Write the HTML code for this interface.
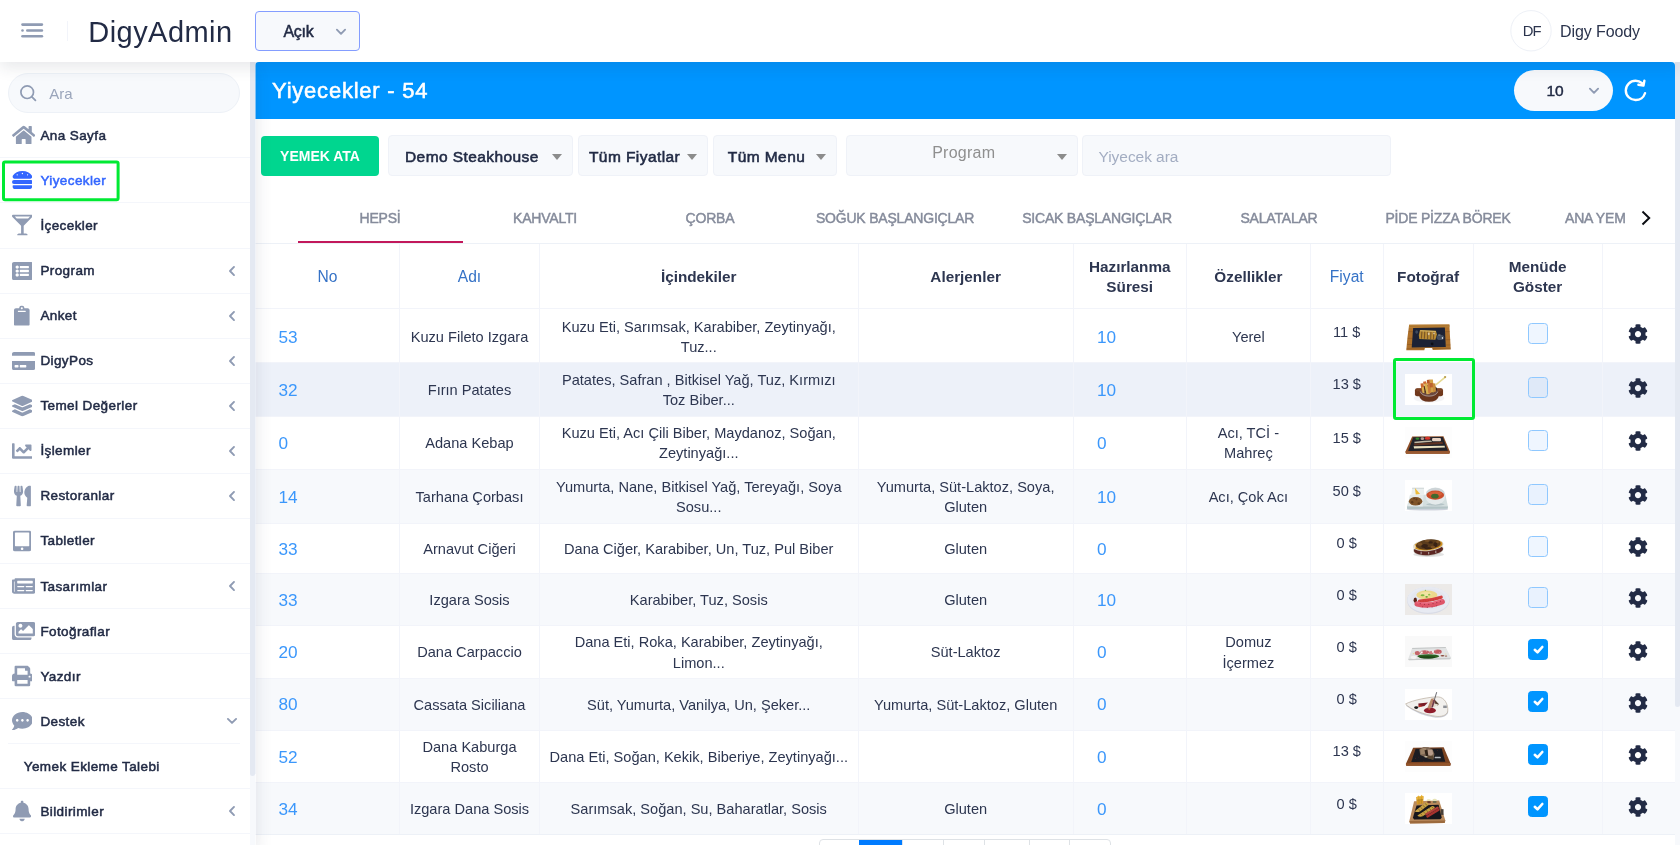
<!DOCTYPE html><html><head><meta charset="utf-8"><title>DigyAdmin</title><style>
*{box-sizing:border-box;margin:0;padding:0}
html,body{width:1680px;height:845px;overflow:hidden;background:#fff}
body{font-family:"Liberation Sans",sans-serif;color:#222b45;position:relative;-webkit-font-smoothing:antialiased}
.abs{position:absolute}
.t{position:absolute;white-space:nowrap;line-height:20px}
.c{transform:translateX(-50%);text-align:center}
#top{will-change:transform;left:0;top:0;width:1680px;height:62px;background:#fff;box-shadow:0 6px 14px 0 rgba(44,51,73,.10);z-index:30}
#side{will-change:transform;left:0;top:62px;width:256px;height:783px;background:linear-gradient(to right,#fff 255px,transparent 255px);box-shadow:0 8px 16px 0 rgba(44,51,73,.12);z-index:20}
#main{will-change:transform;left:255px;top:62px;width:1419.5px;height:783px;background:#fff;z-index:10}
.mi{position:absolute;left:0;width:250px;height:45.07px;border-bottom:1px solid #f4f6fb}
.mi .ic{position:absolute;top:50%;transform:translateY(-50%);line-height:0}
.mi .lb{position:absolute;left:40.4px;top:50%;margin-top:-9.5px;line-height:20px;font-size:13.5px;font-weight:400;-webkit-text-stroke:0.5px currentColor;letter-spacing:0.4px;white-space:nowrap}
.mi .ch{position:absolute;left:228px;top:50%;margin-top:-6px;line-height:0}
.dd{position:absolute;top:73px;height:41px;background:#f7f9fc;border:1px solid #eff2f8;border-radius:4px}
.dd .lb{position:absolute;top:10.7px;line-height:20px;font-size:15.5px;font-weight:400;-webkit-text-stroke:0.55px currentColor;letter-spacing:0.42px;white-space:nowrap}
.caret{position:absolute;width:0;height:0;border-left:5px solid transparent;border-right:5px solid transparent;border-top:6px solid #8c8c8c}
.tab{position:absolute;top:145.5px;line-height:20px;font-size:14px;color:#858b9b;-webkit-text-stroke:0.45px currentColor;letter-spacing:-0.2px;white-space:nowrap;transform:translateX(-50%)}
.vl{position:absolute;top:182px;width:1px;background:#f2f4fa;height:601px}
.row{position:absolute;left:0;width:1419.5px;box-shadow:inset 0 1px 0 #f2f4fa}
.cell{position:absolute;top:0;height:100%;display:flex;align-items:center;justify-content:center;text-align:center;font-size:14.6px;line-height:20.4px;white-space:pre;color:#2d3650;padding-top:4.4px}
.num{position:absolute;font-size:17.2px;color:#3b97fb;line-height:20px;top:50%;margin-top:-8.3px}
.hd{font-weight:700;font-size:15.3px;line-height:20.4px;padding-top:2.6px}
.hl{color:#3572c6;font-weight:400;font-size:15.6px}
.cb{position:absolute;left:1272.7px;width:20.5px;height:21px;border-radius:3.5px;border:1px solid #8fc8ff;background:#eff6ff}
.cb.on{background:#0095ff;border-color:#0095ff}
.img{position:absolute;left:1150px;width:47px;height:31px;overflow:hidden;line-height:0}
</style></head><body>
<div id="top" class="abs">
<svg class="abs" style="left:21px;top:23px" width="23" height="15" viewBox="0 0 23 15"><g fill="#8f9bb3"><rect x="0.2" y="0.3" width="22" height="2.6" rx="1.3"/><rect x="0.2" y="6.2" width="2.6" height="2.6" rx="1.3"/><rect x="5" y="6.2" width="17.2" height="2.6" rx="1.3"/><rect x="0.2" y="12" width="22" height="2.6" rx="1.3"/></g></svg>
<div class="abs" style="left:67px;top:21px;width:1px;height:20px;background:#f2f4fa"></div>
<div class="t " style="left:88.3px;top:21.5px;font-size:29px;font-weight:400;color:#222b45;letter-spacing:0.45px;line-height:34px;margin-top:-7px;">DigyAdmin</div>
<div class="abs" style="left:255px;top:11px;width:105px;height:40px;border:1px solid #849dff;border-radius:4px;background:#f7f9fc"></div>
<div class="t " style="left:283.5px;top:21.8px;font-size:16px;font-weight:400;color:#222b45;letter-spacing:-0.3px;-webkit-text-stroke:0.5px #222b45;">Açık</div>
<svg class="abs" style="left:335px;top:27.6px" width="12" height="8" viewBox="0 0 12 8"><path d="M1.9 1.7 L6 5.8 L10.1 1.7" fill="none" stroke="#8f9bb3" stroke-width="1.9" stroke-linecap="round" stroke-linejoin="round"/></svg>
<svg class="abs" style="left:1505px;top:5px" width="52" height="52"><circle cx="26" cy="25.75" r="20.2" fill="#fff" stroke="#eef1f7" stroke-width="1"/></svg>
<div class="t c" style="left:1531.6px;top:21.3px;font-size:14.8px;font-weight:400;color:#2b344d;letter-spacing:-1.0px;">DF</div>
<div class="t " style="left:1560px;top:22.200000000000003px;font-size:16px;font-weight:400;color:#2b344d;letter-spacing:-0.1px;">Digy Foody</div>
</div>
<div id="side" class="abs">
<div class="abs" style="left:7.5px;top:10.5px;width:232px;height:40px;border:1px solid #edf1f7;border-radius:20px;background:#f7f9fc"></div>
<svg class="abs" style="left:19px;top:22px" width="19" height="19" viewBox="0 0 19 19"><circle cx="8.2" cy="8.2" r="6.3" fill="none" stroke="#8f9bb3" stroke-width="1.7"/><path d="M12.9 12.9 L16.4 16.4" stroke="#8f9bb3" stroke-width="1.8" stroke-linecap="round"/></svg>
<div class="t " style="left:49.3px;top:22.299999999999997px;font-size:15px;font-weight:400;color:#9aa5bb;letter-spacing:0px;">Ara</div>
<div class="mi" style="top:51.30px;"><div class="ic" style="left:11.70px"><svg width="23.400" height="20.8" viewBox="0 0 576 512" style=""><path fill="#8f9bb3" d="M280.37 148.26L96 300.11V464a16 16 0 0 0 16 16l112.06-.29a16 16 0 0 0 15.92-16V368a16 16 0 0 1 16-16h64a16 16 0 0 1 16 16v95.64a16 16 0 0 0 16 16.05L464 480a16 16 0 0 0 16-16V300L295.67 148.26a12.19 12.19 0 0 0-15.3 0zM571.6 251.47L488 182.56V44.05a12 12 0 0 0-12-12h-56a12 12 0 0 0-12 12v72.61L318.47 43a48 48 0 0 0-61 0L4.34 251.47a12 12 0 0 0-1.6 16.9l25.5 31A12 12 0 0 0 45.15 301l235.22-193.74a12.19 12.19 0 0 1 15.3 0L530.9 301a12 12 0 0 0 16.9-1.6l25.5-31a12 12 0 0 0-1.7-16.93z"/></svg></div><div class="lb" style="color:#222b45">Ana Sayfa</div></div>
<div class="mi" style="top:96.37px;"><div class="ic" style="left:11.70px"><svg width="20.800" height="20.8" viewBox="0 0 512 512" style=""><path fill="#3366ff" d="M464 256H48a48 48 0 0 0 0 96h416a48 48 0 0 0 0-96zm16 128H32a16 16 0 0 0-16 16v16a64 64 0 0 0 64 64h352a64 64 0 0 0 64-64v-16a16 16 0 0 0-16-16zM58.64 224h394.72c34.57 0 54.62-43.9 34.82-75.88C448 83.2 359.55 32.1 256 32c-103.54.1-192 51.2-232.18 116.11C4 180.09 24.07 224 58.64 224zM384 112a16 16 0 1 1-16 16 16 16 0 0 1 16-16zM256 80a16 16 0 1 1-16 16 16 16 0 0 1 16-16zm-128 32a16 16 0 1 1-16 16 16 16 0 0 1 16-16z"/></svg></div><div class="lb" style="color:#3366ff">Yiyecekler</div></div>
<div class="mi" style="top:141.44px;"><div class="ic" style="left:11.70px"><svg width="20.800" height="20.8" viewBox="0 0 512 512" style=""><path fill="#8f9bb3" d="M502.05 57.6C523.3 36.34 508.25 0 478.2 0H33.8C3.75 0-11.3 36.34 9.95 57.6L224 271.64V464h-56c-22.09 0-40 17.91-40 40 0 4.42 3.58 8 8 8h240c4.42 0 8-3.58 8-8 0-22.09-17.91-40-40-40h-56V271.64L502.05 57.6zM443.77 48l-48 48H116.24l-48-48h375.53z"/></svg></div><div class="lb" style="color:#222b45">İçecekler</div></div>
<div class="mi" style="top:186.51px;"><div class="ic" style="left:11.70px"><svg width="20.800" height="20.8" viewBox="0 0 512 512" style=""><path fill="#8f9bb3" d="M464 480H48c-26.51 0-48-21.49-48-48V80c0-26.51 21.49-48 48-48h416c26.51 0 48 21.49 48 48v352c0 26.51-21.49 48-48 48zM128 120c-22.091 0-40 17.909-40 40s17.909 40 40 40 40-17.909 40-40-17.909-40-40-40zm0 96c-22.091 0-40 17.909-40 40s17.909 40 40 40 40-17.909 40-40-17.909-40-40-40zm0 96c-22.091 0-40 17.909-40 40s17.909 40 40 40 40-17.909 40-40-17.909-40-40-40zm288-136v-32c0-6.627-5.373-12-12-12H204c-6.627 0-12 5.373-12 12v32c0 6.627 5.373 12 12 12h200c6.627 0 12-5.373 12-12zm0 96v-32c0-6.627-5.373-12-12-12H204c-6.627 0-12 5.373-12 12v32c0 6.627 5.373 12 12 12h200c6.627 0 12-5.373 12-12zm0 96v-32c0-6.627-5.373-12-12-12H204c-6.627 0-12 5.373-12 12v32c0 6.627 5.373 12 12 12h200c6.627 0 12-5.373 12-12z"/></svg></div><div class="lb" style="color:#222b45">Program</div><div class="ch"><svg width="8" height="12" viewBox="0 0 8 12"><path d="M6.0 1.9 L2.0 6 L6.0 10.1" fill="none" stroke="#8f9bb3" stroke-width="1.9" stroke-linecap="round" stroke-linejoin="round"/></svg></div></div>
<div class="mi" style="top:231.58px;"><div class="ic" style="left:14.30px"><svg width="15.600" height="20.8" viewBox="0 0 384 512" style=""><path fill="#8f9bb3" d="M384 112v352c0 26.51-21.49 48-48 48H48c-26.51 0-48-21.49-48-48V112c0-26.51 21.49-48 48-48h80c0-35.29 28.71-64 64-64s64 28.71 64 64h80c26.51 0 48 21.49 48 48zM192 40c-13.255 0-24 10.745-24 24s10.745 24 24 24 24-10.745 24-24-10.745-24-24-24m96 114v-20a6 6 0 0 0-6-6H102a6 6 0 0 0-6 6v20a6 6 0 0 0 6 6h180a6 6 0 0 0 6-6z"/></svg></div><div class="lb" style="color:#222b45">Anket</div><div class="ch"><svg width="8" height="12" viewBox="0 0 8 12"><path d="M6.0 1.9 L2.0 6 L6.0 10.1" fill="none" stroke="#8f9bb3" stroke-width="1.9" stroke-linecap="round" stroke-linejoin="round"/></svg></div></div>
<div class="mi" style="top:276.65px;"><div class="ic" style="left:11.70px"><svg width="23.400" height="20.8" viewBox="0 0 576 512" style=""><path fill="#8f9bb3" d="M0 432c0 26.5 21.5 48 48 48h480c26.5 0 48-21.5 48-48V256H0v176zm192-68c0-6.6 5.4-12 12-12h136c6.6 0 12 5.4 12 12v40c0 6.6-5.4 12-12 12H204c-6.6 0-12-5.4-12-12v-40zm-128 0c0-6.6 5.4-12 12-12h72c6.6 0 12 5.4 12 12v40c0 6.6-5.4 12-12 12H76c-6.6 0-12-5.4-12-12v-40zM576 80v48H0V80c0-26.5 21.5-48 48-48h480c26.5 0 48 21.5 48 48z"/></svg></div><div class="lb" style="color:#222b45">DigyPos</div><div class="ch"><svg width="8" height="12" viewBox="0 0 8 12"><path d="M6.0 1.9 L2.0 6 L6.0 10.1" fill="none" stroke="#8f9bb3" stroke-width="1.9" stroke-linecap="round" stroke-linejoin="round"/></svg></div></div>
<div class="mi" style="top:321.72px;"><div class="ic" style="left:11.70px"><svg width="20.800" height="20.8" viewBox="0 0 512 512" style=""><path fill="#8f9bb3" d="M12.41 148.02l232.94 105.67c6.8 3.09 14.49 3.09 21.29 0l232.94-105.67c16.55-7.51 16.55-32.52 0-40.03L266.65 2.31a25.607 25.607 0 0 0-21.29 0L12.41 107.98c-16.55 7.51-16.55 32.53 0 40.04zm487.18 88.28l-58.09-26.33-161.64 73.27c-7.56 3.43-15.59 5.17-23.86 5.17s-16.29-1.74-23.86-5.17L70.51 209.97l-58.1 26.33c-16.55 7.5-16.55 32.5 0 40l232.94 105.59c6.8 3.08 14.49 3.08 21.29 0L499.59 276.3c16.55-7.5 16.55-32.5 0-40zm0 127.8l-57.87-26.23-161.86 73.37c-7.56 3.43-15.59 5.17-23.86 5.17s-16.29-1.74-23.86-5.17L70.29 337.87 12.41 364.1c-16.55 7.5-16.55 32.5 0 40l232.94 105.59c6.8 3.08 14.49 3.08 21.29 0L499.59 404.1c16.55-7.5 16.55-32.5 0-40z"/></svg></div><div class="lb" style="color:#222b45">Temel Değerler</div><div class="ch"><svg width="8" height="12" viewBox="0 0 8 12"><path d="M6.0 1.9 L2.0 6 L6.0 10.1" fill="none" stroke="#8f9bb3" stroke-width="1.9" stroke-linecap="round" stroke-linejoin="round"/></svg></div></div>
<div class="mi" style="top:366.79px;"><div class="ic" style="left:11.70px"><svg width="20.800" height="20.8" viewBox="0 0 512 512" style=""><path fill="#8f9bb3" d="M496 384H64V80c0-8.84-7.16-16-16-16H16C7.16 64 0 71.16 0 80v336c0 17.67 14.33 32 32 32h464c8.84 0 16-7.16 16-16v-32c0-8.84-7.16-16-16-16zM464 96H345.94c-21.38 0-32.09 25.85-16.97 40.97l32.4 32.4L288 242.75l-73.37-73.37c-12.5-12.5-32.76-12.5-45.25 0l-68.69 68.69c-6.25 6.25-6.25 16.38 0 22.63l22.62 22.62c6.25 6.25 16.38 6.25 22.63 0L192 237.25l73.37 73.37c12.5 12.5 32.76 12.5 45.25 0l96-96 32.4 32.4c15.12 15.12 40.97 4.41 40.97-16.97V112c.01-8.84-7.15-16-15.99-16z"/></svg></div><div class="lb" style="color:#222b45">İşlemler</div><div class="ch"><svg width="8" height="12" viewBox="0 0 8 12"><path d="M6.0 1.9 L2.0 6 L6.0 10.1" fill="none" stroke="#8f9bb3" stroke-width="1.9" stroke-linecap="round" stroke-linejoin="round"/></svg></div></div>
<div class="mi" style="top:411.86px;"><div class="ic" style="left:13.65px"><svg width="16.900" height="20.8" viewBox="0 0 416 512" style=""><path fill="#8f9bb3" d="M207.9 15.2c.8 4.7 16.1 94.5 16.1 128.8 0 52.3-27.8 89.6-68.9 104.6L168 486.7c.7 13.7-10.2 25.3-24 25.3H80c-13.7 0-24.7-11.5-24-25.3l12.9-238.1C27.7 233.6 0 196.2 0 144 0 109.6 15.3 19.9 16.1 15.2 19.3-5.1 61.4-5.4 64 16.3v141.2c1.3 3.4 15.1 3.2 16 0 1.4-25.3 7.9-139.2 8-141.8 3.3-20.8 44.7-20.8 47.9 0 .2 2.7 6.6 116.5 8 141.8.9 3.2 14.8 3.4 16 0V16.3c2.6-21.6 44.8-21.4 48-1.1zm119.2 285.7l-15 185.1c-1.2 14 9.9 26 23.9 26h56c13.3 0 24-10.7 24-24V24c0-13.2-10.7-24-24-24-82.5 0-221.4 178.5-64.9 300.9z"/></svg></div><div class="lb" style="color:#222b45">Restoranlar</div><div class="ch"><svg width="8" height="12" viewBox="0 0 8 12"><path d="M6.0 1.9 L2.0 6 L6.0 10.1" fill="none" stroke="#8f9bb3" stroke-width="1.9" stroke-linecap="round" stroke-linejoin="round"/></svg></div></div>
<div class="mi" style="top:456.93px;"><div class="ic" style="left:13.00px"><svg width="18.200" height="20.8" viewBox="0 0 448 512" style=""><path fill="#8f9bb3" d="M400 0H48C21.5 0 0 21.5 0 48v416c0 26.5 21.5 48 48 48h352c26.5 0 48-21.5 48-48V48c0-26.5-21.5-48-48-48zM224 480c-17.7 0-32-14.3-32-32s14.3-32 32-32 32 14.3 32 32-14.3 32-32 32zm176-108c0 6.6-5.4 12-12 12H60c-6.6 0-12-5.4-12-12V60c0-6.6 5.4-12 12-12h328c6.6 0 12 5.4 12 12v312z"/></svg></div><div class="lb" style="color:#222b45">Tabletler</div></div>
<div class="mi" style="top:502.00px;"><div class="ic" style="left:11.70px"><svg width="23.400" height="20.8" viewBox="0 0 576 512" style=""><path fill="#8f9bb3" d="M552 64H88c-13.255 0-24 10.745-24 24v8H24c-13.255 0-24 10.745-24 24v272c0 30.928 25.072 56 56 56h472c26.51 0 48-21.49 48-48V88c0-13.255-10.745-24-24-24zM56 400a8 8 0 0 1-8-8V144h16v248a8 8 0 0 1-8 8zm236-16H140c-6.627 0-12-5.373-12-12v-8c0-6.627 5.373-12 12-12h152c6.627 0 12 5.373 12 12v8c0 6.627-5.373 12-12 12zm208 0H348c-6.627 0-12-5.373-12-12v-8c0-6.627 5.373-12 12-12h152c6.627 0 12 5.373 12 12v8c0 6.627-5.373 12-12 12zm-208-96H140c-6.627 0-12-5.373-12-12v-8c0-6.627 5.373-12 12-12h152c6.627 0 12 5.373 12 12v8c0 6.627-5.373 12-12 12zm208 0H348c-6.627 0-12-5.373-12-12v-8c0-6.627 5.373-12 12-12h152c6.627 0 12 5.373 12 12v8c0 6.627-5.373 12-12 12zm0-96H140c-6.627 0-12-5.373-12-12v-40c0-6.627 5.373-12 12-12h360c6.627 0 12 5.373 12 12v40c0 6.627-5.373 12-12 12z"/></svg></div><div class="lb" style="color:#222b45">Tasarımlar</div><div class="ch"><svg width="8" height="12" viewBox="0 0 8 12"><path d="M6.0 1.9 L2.0 6 L6.0 10.1" fill="none" stroke="#8f9bb3" stroke-width="1.9" stroke-linecap="round" stroke-linejoin="round"/></svg></div></div>
<div class="mi" style="top:547.07px;"><div class="ic" style="left:11.70px"><svg width="23.400" height="20.8" viewBox="0 0 576 512" style=""><path fill="#8f9bb3" d="M480 416v16c0 26.51-21.49 48-48 48H48c-26.51 0-48-21.49-48-48V176c0-26.51 21.49-48 48-48h16v208c0 44.112 35.888 80 80 80h336zm96-80V80c0-26.51-21.49-48-48-48H144c-26.51 0-48 21.49-48 48v256c0 26.51 21.49 48 48 48h384c26.51 0 48-21.49 48-48zM256 128c0 26.51-21.49 48-48 48s-48-21.49-48-48 21.49-48 48-48 48 21.49 48 48zm-96 144l55.515-55.515c4.686-4.686 12.284-4.686 16.971 0L272 256l135.515-135.515c4.686-4.686 12.284-4.686 16.971 0L512 208v112H160v-48z"/></svg></div><div class="lb" style="color:#222b45">Fotoğraflar</div></div>
<div class="mi" style="top:592.14px;"><div class="ic" style="left:11.70px"><svg width="20.800" height="20.8" viewBox="0 0 512 512" style=""><path fill="#8f9bb3" d="M448 192V77.25c0-8.49-3.37-16.62-9.37-22.63L393.37 9.37c-6-6-14.14-9.37-22.63-9.37H96C78.33 0 64 14.33 64 32v160c-35.35 0-64 28.65-64 64v112c0 8.84 7.16 16 16 16h48v96c0 17.67 14.33 32 32 32h320c17.67 0 32-14.33 32-32v-96h48c8.84 0 16-7.16 16-16V256c0-35.35-28.65-64-64-64zm-64 256H128v-96h256v96zm0-224H128V64h192v48c0 8.84 7.16 16 16 16h48v96zm48 72c-13.25 0-24-10.75-24-24 0-13.26 10.75-24 24-24s24 10.74 24 24c0 13.25-10.75 24-24 24z"/></svg></div><div class="lb" style="color:#222b45">Yazdır</div></div>
<div class="mi" style="top:637.21px;border-bottom-color:transparent;"><div class="ic" style="left:11.70px"><svg width="20.800" height="20.8" viewBox="0 0 512 512" style=""><path fill="#8f9bb3" d="M256 32C114.6 32 0 125.1 0 240c0 49.6 21.4 95 57 130.7C44.5 421.1 2.7 466 2.2 466.5c-2.2 2.3-2.8 5.7-1.5 8.7S4.8 480 8 480c66.3 0 116-31.8 140.6-51.4 32.7 12.3 69 19.4 107.4 19.4 141.4 0 256-93.1 256-208S397.4 32 256 32zM128 272c-17.7 0-32-14.3-32-32s14.3-32 32-32 32 14.3 32 32-14.3 32-32 32zm128 0c-17.7 0-32-14.3-32-32s14.3-32 32-32 32 14.3 32 32-14.3 32-32 32zm128 0c-17.7 0-32-14.3-32-32s14.3-32 32-32 32 14.3 32 32-14.3 32-32 32z"/></svg></div><div class="lb" style="color:#222b45">Destek</div><div class="ch" style="left:226px;margin-top:-4px"><svg width="12" height="8" viewBox="0 0 12 8"><path d="M1.9 1.9 L6 5.9 L10.1 1.9" fill="none" stroke="#8f9bb3" stroke-width="1.9" stroke-linecap="round" stroke-linejoin="round"/></svg></div></div>
<div class="mi" style="top:682.28px"><div class="lb" style="left:23.8px">Yemek Ekleme Talebi</div></div>
<div class="mi" style="top:727.35px;"><div class="ic" style="left:13.00px"><svg width="18.200" height="20.8" viewBox="0 0 448 512" style=""><path fill="#8f9bb3" d="M224 512c35.32 0 63.97-28.65 63.97-64H160.03c0 35.35 28.65 64 63.97 64zm215.39-149.71c-19.32-20.76-55.47-51.99-55.47-154.29 0-77.7-54.48-139.9-127.94-155.16V32c0-17.67-14.32-32-31.98-32s-31.98 14.33-31.98 32v20.84C118.56 68.1 64.08 130.3 64.08 208c0 102.3-36.15 133.53-55.47 154.29-6 6.45-8.66 14.16-8.61 21.71.11 16.4 12.98 32 32.1 32h383.8c19.12 0 32-15.6 32.1-32 .05-7.55-2.61-15.27-8.61-21.71z"/></svg></div><div class="lb" style="color:#222b45">Bildirimler</div><div class="ch"><svg width="8" height="12" viewBox="0 0 8 12"><path d="M6.0 1.9 L2.0 6 L6.0 10.1" fill="none" stroke="#8f9bb3" stroke-width="1.9" stroke-linecap="round" stroke-linejoin="round"/></svg></div></div>
<div class="abs" style="left:7.5px;top:681.28px;width:232px;height:1px;background:#f4f6fb"></div>
<svg class="abs" style="left:0;top:90px;overflow:visible" width="130" height="60"><rect x="3.5" y="10.05" width="114.6" height="37.6" rx="1.5" fill="none" stroke="#00ea33" stroke-width="3"/></svg>
<div class="abs" style="left:250px;top:0;width:5px;height:783px;background:#f7f9fc"></div>
<div class="abs" style="left:250px;top:0;width:5px;height:714px;background:#e4e9f2;border-radius:0 0 2.6px 2.6px"></div>
<div class="abs" style="left:255px;top:0;width:1px;height:712px;background:rgba(228,233,242,0.55)"></div>
<div class="abs" style="left:255px;top:712px;width:1px;height:71px;background:rgba(247,249,252,0.55)"></div>
</div>
<div id="main" class="abs">
<div class="abs" style="left:0;top:0;width:1419.5px;height:56.5px;background:#0095ff;border-radius:4px 4px 0 0"></div>
<div class="t " style="left:17.0px;top:18.799999999999997px;font-size:22px;font-weight:400;color:#fff;letter-spacing:0.78px;line-height:28px;margin-top:-4px;-webkit-text-stroke:0.55px #fff;">Yiyecekler - 54</div>
<div class="abs" style="left:1259px;top:8px;width:99px;height:41px;border-radius:20.5px;background:#f7f9fc"></div>
<div class="t " style="left:1291.5px;top:18.799999999999997px;font-size:15.5px;font-weight:400;color:#222b45;letter-spacing:0px;-webkit-text-stroke:0.45px #222b45;">10</div>
<svg class="abs" style="left:1333.3px;top:25.400000000000006px" width="12" height="8" viewBox="0 0 12 8"><path d="M1.9 1.7 L6 5.8 L10.1 1.7" fill="none" stroke="#8f9bb3" stroke-width="1.9" stroke-linecap="round" stroke-linejoin="round"/></svg>
<svg class="abs" style="left:1366.0px;top:14.099999999999994px" width="28.8" height="28.8" viewBox="0 0 24 24"><path fill="#fff" d="M20.3 13.43a1 1 0 0 0-1.25.65A7.14 7.14 0 0 1 12.18 19 7.1 7.1 0 0 1 5 12a7.1 7.1 0 0 1 7.18-7 7.26 7.26 0 0 1 4.65 1.67l-2.17-.36a1 1 0 0 0-1.15.83 1 1 0 0 0 .83 1.15l4.24.7h.17a1 1 0 0 0 .34-.06.33.33 0 0 0 .1-.06.78.78 0 0 0 .2-.11l.09-.11c0-.05.09-.09.13-.15s0-.1.05-.14a1.34 1.34 0 0 0 .07-.18l.75-4a1 1 0 0 0-2-.38l-.27 1.45A9.21 9.21 0 0 0 12.18 3 9.1 9.1 0 0 0 3 12a9.1 9.1 0 0 0 9.18 9A9.12 9.12 0 0 0 21 14.68a1 1 0 0 0-.7-1.25z"/></svg>
<div class="abs" style="left:5.5px;top:73.5px;width:118.3px;height:40px;border-radius:4px;background:#00d68f"></div>
<div class="t c" style="left:65px;top:84px;font-size:14px;font-weight:700;color:#fff;letter-spacing:0px;">YEMEK ATA</div>
<div class="dd" style="left:132.5px;width:185.5px"><div class="lb" style="left:16.5px">Demo Steakhouse</div><div class="caret" style="left:163.79999999999995px;top:17.5px"></div></div>
<div class="dd" style="left:323.20000000000005px;width:130.0px"><div class="lb" style="left:9.799999999999955px">Tüm Fiyatlar</div><div class="caret" style="left:108.29999999999995px;top:17.5px"></div></div>
<div class="dd" style="left:458.20000000000005px;width:123.59999999999991px"><div class="lb" style="left:13.599999999999909px">Tüm Menu</div><div class="caret" style="left:102.0px;top:17.5px"></div></div>
<div class="dd" style="left:591.2px;width:231.79999999999995px"><div class="caret" style="left:209.5px;top:17.5px"></div></div>
<div class="t c" style="left:708.7px;top:81.19999999999999px;font-size:16px;font-weight:400;color:#8f8f8f;letter-spacing:0.25px;">Program</div>
<div class="dd" style="left:826.7px;width:309.0px"></div>
<div class="t " style="left:843.5px;top:84.80000000000001px;font-size:15.5px;font-weight:400;color:#a3adc2;letter-spacing:-0.05px;">Yiyecek ara</div>
<div class="tab" style="left:125px">HEPSİ</div>
<div class="tab" style="left:290px">KAHVALTI</div>
<div class="tab" style="left:455px">ÇORBA</div>
<div class="tab" style="left:640px">SOĞUK BAŞLANGIÇLAR</div>
<div class="tab" style="left:842px">SICAK BAŞLANGIÇLAR</div>
<div class="tab" style="left:1024px">SALATALAR</div>
<div class="tab" style="left:1193px">PİDE PİZZA BÖREK</div>
<div class="tab" style="left:1310px;transform:none">ANA YEM</div>
<svg class="abs" style="left:1385px;top:148px" width="12" height="16" viewBox="0 0 12 16"><path d="M3.2 2.2 L9.2 8 L3.2 13.8" fill="none" stroke="#0b0d12" stroke-width="2" stroke-linecap="square" stroke-linejoin="miter"/></svg>
<div class="abs" style="left:0;top:181.3px;width:1419.5px;height:1px;background:#edf1f7"></div>
<div class="abs" style="left:42.80000000000001px;top:178.8px;width:165px;height:2.2px;background:#c2185b"></div>
<div class="row" style="top:182px;height:64.39999999999998px;box-shadow:none">
<div class="cell hd hl" style="left:0.5px;width:144.0px">No</div>
<div class="cell hd hl" style="left:144.5px;width:140.0px">Adı</div>
<div class="cell hd " style="left:284.5px;width:318.5px">İçindekiler</div>
<div class="cell hd " style="left:603px;width:215.25px">Alerjenler</div>
<div class="cell hd " style="left:818.25px;width:113.0px">Hazırlanma
Süresi</div>
<div class="cell hd " style="left:931.25px;width:124.25px">Özellikler</div>
<div class="cell hd hl" style="left:1055.5px;width:72.5px">Fiyat</div>
<div class="cell hd " style="left:1128px;width:90.25px">Fotoğraf</div>
<div class="cell hd " style="left:1218.25px;width:128.75px">Menüde
Göster</div>
<div class="cell hd " style="left:1347px;width:72.5px"></div>
</div>
<div class="row" style="top:246.4px;height:53.6px;background:#fff">
<div class="num" style="left:23.399999999999977px;margin-top:-8.3px">53</div>
<div class="cell" style="left:144.5px;width:140.0px;padding-top:4.4px;">Kuzu Fileto Izgara</div>
<div class="cell" style="left:284.5px;width:318.5px;padding-top:4.4px;">Kuzu Eti, Sarımsak, Karabiber, Zeytinyağı,
Tuz...</div>
<div class="cell" style="left:931.25px;width:124.25px;padding-top:4.4px;">Yerel</div>
<div class="num" style="left:842px;margin-top:-8.3px">10</div>
<div class="cell" style="left:1055.5px;width:72.5px;height:42.6px;padding-top:4.4px;">11 $</div>
<div class="cb" style="top:14.6px;"></div>
<div class="abs" style="left:1373px;top:15.9px;line-height:0"><svg width="20.000" height="20" viewBox="0 0 512 512" style=""><path fill="#222b45" d="M487.4 315.7l-42.6-24.6c4.3-23.2 4.3-47 0-70.2l42.6-24.6c4.9-2.8 7.1-8.6 5.5-14-11.1-35.6-30-67.8-54.7-94.6-3.8-4.1-10-5.1-14.8-2.3L380.8 110c-17.9-15.4-38.5-27.3-60.8-35.1V25.8c0-5.6-3.9-10.5-9.4-11.7-36.7-8.2-74.3-7.8-109.2 0-5.5 1.2-9.4 6.1-9.4 11.7V75c-22.2 7.9-42.8 19.8-60.8 35.1L88.7 85.5c-4.9-2.8-11-1.9-14.8 2.3-24.7 26.7-43.6 58.9-54.7 94.6-1.7 5.4.6 11.2 5.5 14L67.3 221c-4.3 23.2-4.3 47 0 70.2l-42.6 24.6c-4.9 2.8-7.1 8.6-5.5 14 11.1 35.6 30 67.8 54.7 94.6 3.8 4.1 10 5.1 14.8 2.3l42.6-24.6c17.9 15.4 38.5 27.3 60.8 35.1v49.2c0 5.6 3.9 10.5 9.4 11.7 36.7 8.2 74.3 7.8 109.2 0 5.5-1.2 9.4-6.1 9.4-11.7v-49.2c22.2-7.9 42.8-19.8 60.8-35.1l42.6 24.6c4.9 2.8 11 1.9 14.8-2.3 24.7-26.7 43.6-58.9 54.7-94.6 1.5-5.5-.7-11.3-5.6-14.1zM256 336c-44.1 0-80-35.9-80-80s35.9-80 80-80 80 35.9 80 80-35.9 80-80 80z"/></svg></div>
<div class="img" style="top:11.5px"><svg width="47" height="31" viewBox="0 0 47 31" style="display:block"><defs><filter id="tb1" x="-5%" y="-5%" width="110%" height="110%"><feGaussianBlur stdDeviation="11"/></filter><clipPath id="tc1"><rect x="148" y="82" width="993" height="655"/></clipPath></defs><g transform="scale(0.04733) translate(-148,-82)"><g clip-path="url(#tc1)"><g filter="url(#tb1)">
<polygon points="235,185 1085,175 1100,450 1115,705 735,715 720,672 570,672 555,722 175,722 200,450" fill="#ad702b"/>
<polygon points="235,185 1085,175 1087,235 232,245" fill="#bd8538"/>
<g stroke="#6d3f15" stroke-width="12" opacity=".55"><line x1="240" y1="215" x2="1085" y2="205"/><line x1="180" y1="690" x2="555" y2="690"/><line x1="735" y1="685" x2="1112" y2="680"/><line x1="215" y1="330" x2="320" y2="328"/><line x1="205" y1="470" x2="310" y2="468"/><line x1="195" y1="600" x2="300" y2="598"/><line x1="1000" y1="330" x2="1095" y2="328"/><line x1="1005" y1="500" x2="1105" y2="498"/><line x1="1010" y1="610" x2="1110" y2="608"/></g>
<polygon points="320,250 990,240 1010,650 290,662" fill="#1c2434"/>
<ellipse cx="895" cy="450" rx="80" ry="55" fill="#7f8ca0" opacity=".4"/>
<ellipse cx="870" cy="400" rx="30" ry="22" fill="#9aa7b8" opacity=".45"/>
<ellipse cx="938" cy="462" rx="13" ry="20" fill="#eef3f6" opacity=".9"/>
<ellipse cx="395" cy="335" rx="30" ry="35" fill="#5a6882" opacity=".55"/>
<polygon points="465,295 800,310 822,385 790,500 450,482 440,400" fill="#b98c34"/>
<g stroke="#563820" stroke-width="24" opacity=".62"><line x1="505" y1="320" x2="495" y2="475"/><line x1="565" y1="320" x2="558" y2="480"/><line x1="630" y1="325" x2="624" y2="485"/><line x1="695" y1="328" x2="690" y2="490"/><line x1="755" y1="335" x2="750" y2="490"/></g>
<polygon points="470,300 795,315 800,335 470,322" fill="#e4c878" opacity=".7"/>
<ellipse cx="650" cy="375" rx="20" ry="28" fill="#e9e2d6" opacity=".7"/>
<ellipse cx="760" cy="365" rx="18" ry="18" fill="#efe7dc" opacity=".7"/>
<circle cx="722" cy="588" r="30" fill="#0c1017"/>
</g></g></g></svg></div>
</div>
<div class="row" style="top:300.0px;height:53.6px;background:#edf1f9">
<div class="num" style="left:23.399999999999977px;margin-top:-9.3px">32</div>
<div class="cell" style="left:144.5px;width:140.0px;padding-top:2.4px;">Fırın Patates</div>
<div class="cell" style="left:284.5px;width:318.5px;padding-top:2.4px;">Patates, Safran , Bitkisel Yağ, Tuz, Kırmızı
Toz Biber...</div>
<div class="num" style="left:842px;margin-top:-9.3px">10</div>
<div class="cell" style="left:1055.5px;width:72.5px;height:42.6px;padding-top:2.4px;">13 $</div>
<div class="cb" style="top:14.6px;background:#dfe9f8;"></div>
<div class="abs" style="left:1373px;top:15.9px;line-height:0"><svg width="20.000" height="20" viewBox="0 0 512 512" style=""><path fill="#222b45" d="M487.4 315.7l-42.6-24.6c4.3-23.2 4.3-47 0-70.2l42.6-24.6c4.9-2.8 7.1-8.6 5.5-14-11.1-35.6-30-67.8-54.7-94.6-3.8-4.1-10-5.1-14.8-2.3L380.8 110c-17.9-15.4-38.5-27.3-60.8-35.1V25.8c0-5.6-3.9-10.5-9.4-11.7-36.7-8.2-74.3-7.8-109.2 0-5.5 1.2-9.4 6.1-9.4 11.7V75c-22.2 7.9-42.8 19.8-60.8 35.1L88.7 85.5c-4.9-2.8-11-1.9-14.8 2.3-24.7 26.7-43.6 58.9-54.7 94.6-1.7 5.4.6 11.2 5.5 14L67.3 221c-4.3 23.2-4.3 47 0 70.2l-42.6 24.6c-4.9 2.8-7.1 8.6-5.5 14 11.1 35.6 30 67.8 54.7 94.6 3.8 4.1 10 5.1 14.8 2.3l42.6-24.6c17.9 15.4 38.5 27.3 60.8 35.1v49.2c0 5.6 3.9 10.5 9.4 11.7 36.7 8.2 74.3 7.8 109.2 0 5.5-1.2 9.4-6.1 9.4-11.7v-49.2c22.2-7.9 42.8-19.8 60.8-35.1l42.6 24.6c4.9 2.8 11 1.9 14.8-2.3 24.7-26.7 43.6-58.9 54.7-94.6 1.5-5.5-.7-11.3-5.6-14.1zM256 336c-44.1 0-80-35.9-80-80s35.9-80 80-80 80 35.9 80 80-35.9 80-80 80z"/></svg></div>
<div class="img" style="top:11.5px"><svg width="47" height="31" viewBox="0 0 47 31" style="display:block"><defs><filter id="tb2" x="-5%" y="-5%" width="110%" height="110%"><feGaussianBlur stdDeviation="11"/></filter><clipPath id="tc2"><rect x="148" y="99" width="993" height="655"/></clipPath></defs><g transform="scale(0.04733) translate(-148,-99)"><g clip-path="url(#tc2)"><rect x="148" y="99" width="993" height="655" fill="#ffffff"/><g filter="url(#tb2)">
<ellipse cx="655" cy="610" rx="320" ry="95" fill="#e6e6ea" opacity=".45"/>
<rect x="358" y="400" width="594" height="170" rx="45" fill="#70391f"/>
<ellipse cx="655" cy="565" rx="205" ry="122" fill="#6a351d"/>
<rect x="380" y="405" width="550" height="60" rx="30" fill="#824827" opacity=".8"/>
<ellipse cx="655" cy="465" rx="188" ry="115" fill="#6b463c"/>
<path d="M470 470 A188 112 0 0 0 842 470" fill="none" stroke="#cfc4bb" stroke-width="16" opacity=".8"/>
<ellipse cx="655" cy="415" rx="172" ry="82" fill="#33241b"/>
<polygon points="475,300 540,292 562,470 500,474" fill="#c9672f"/>
<polygon points="545,290 612,284 672,522 602,528" fill="#d9ae50"/>
<polygon points="610,225 668,220 702,500 642,506" fill="#c97a3a"/>
<polygon points="610,225 668,220 672,290 615,295" fill="#b8552c"/>
<polygon points="665,215 737,215 762,482 692,492" fill="#d3a246"/>
<polygon points="668,290 740,290 748,380 676,385" fill="#b8542a" opacity=".8"/>
<polygon points="730,292 792,302 802,470 746,482" fill="#c98c3c"/>
<polygon points="528,262 592,254 602,302 540,308" fill="#cf6a33"/>
<polygon points="500,380 545,380 560,500 520,500" fill="#d6b050"/>
<line x1="805" y1="325" x2="1000" y2="165" stroke="#e6da92" stroke-width="32" stroke-linecap="round"/>
<circle cx="995" cy="165" r="24" fill="#b9a052"/>
</g></g></g></svg></div>
</div>
<div class="row" style="top:353.6px;height:53.4px;background:#fff">
<div class="num" style="left:23.399999999999977px;margin-top:-9.3px">0</div>
<div class="cell" style="left:144.5px;width:140.0px;padding-top:2.4px;">Adana Kebap</div>
<div class="cell" style="left:284.5px;width:318.5px;padding-top:2.4px;">Kuzu Eti, Acı Çili Biber, Maydanoz, Soğan,
Zeytinyağı...</div>
<div class="cell" style="left:931.25px;width:124.25px;padding-top:2.4px;">Acı, TCİ -
Mahreç</div>
<div class="num" style="left:842px;margin-top:-9.3px">0</div>
<div class="cell" style="left:1055.5px;width:72.5px;height:42.4px;padding-top:2.4px;">15 $</div>
<div class="cb" style="top:14.5px;"></div>
<div class="abs" style="left:1373px;top:15.8px;line-height:0"><svg width="20.000" height="20" viewBox="0 0 512 512" style=""><path fill="#222b45" d="M487.4 315.7l-42.6-24.6c4.3-23.2 4.3-47 0-70.2l42.6-24.6c4.9-2.8 7.1-8.6 5.5-14-11.1-35.6-30-67.8-54.7-94.6-3.8-4.1-10-5.1-14.8-2.3L380.8 110c-17.9-15.4-38.5-27.3-60.8-35.1V25.8c0-5.6-3.9-10.5-9.4-11.7-36.7-8.2-74.3-7.8-109.2 0-5.5 1.2-9.4 6.1-9.4 11.7V75c-22.2 7.9-42.8 19.8-60.8 35.1L88.7 85.5c-4.9-2.8-11-1.9-14.8 2.3-24.7 26.7-43.6 58.9-54.7 94.6-1.7 5.4.6 11.2 5.5 14L67.3 221c-4.3 23.2-4.3 47 0 70.2l-42.6 24.6c-4.9 2.8-7.1 8.6-5.5 14 11.1 35.6 30 67.8 54.7 94.6 3.8 4.1 10 5.1 14.8 2.3l42.6-24.6c17.9 15.4 38.5 27.3 60.8 35.1v49.2c0 5.6 3.9 10.5 9.4 11.7 36.7 8.2 74.3 7.8 109.2 0 5.5-1.2 9.4-6.1 9.4-11.7v-49.2c22.2-7.9 42.8-19.8 60.8-35.1l42.6 24.6c4.9 2.8 11 1.9 14.8-2.3 24.7-26.7 43.6-58.9 54.7-94.6 1.5-5.5-.7-11.3-5.6-14.1zM256 336c-44.1 0-80-35.9-80-80s35.9-80 80-80 80 35.9 80 80-35.9 80-80 80z"/></svg></div>
<div class="img" style="top:11.4px"><svg width="47" height="31" viewBox="0 0 47 31" style="display:block"><defs><filter id="tb3" x="-5%" y="-5%" width="110%" height="110%"><feGaussianBlur stdDeviation="11"/></filter><clipPath id="tc3"><rect x="148" y="85" width="993" height="655"/></clipPath></defs><g transform="scale(0.04733) translate(-148,-85)"><g clip-path="url(#tc3)"><rect x="148" y="85" width="993" height="655" fill="#fdfdfd"/><g filter="url(#tb3)">
<polygon points="300,285 960,280 1100,615 1085,648 170,648 155,615" fill="#8c4e28"/>
<polygon points="160,600 1095,600 1085,648 170,648" fill="#9a5a30"/>
<polygon points="322,302 945,297 1055,585 215,592" fill="#21242b"/>
<polygon points="330,492 985,480 992,520 340,537" fill="#ebe0be"/>
<polygon points="345,395 560,378 700,372 720,398 350,428" fill="#d9d0b8" opacity=".85"/>
<polygon points="335,432 940,395 950,442 345,478" fill="#5e3020"/>
<rect x="720" y="320" width="188" height="68" rx="22" fill="#e8d2c2"/>
<ellipse cx="625" cy="322" rx="62" ry="33" fill="#d9362c"/>
<ellipse cx="410" cy="332" rx="40" ry="23" fill="#2e8a2c"/>
<ellipse cx="515" cy="332" rx="38" ry="28" fill="#b59a92"/>
</g></g></g></svg></div>
</div>
<div class="row" style="top:407.0px;height:53.6px;background:#f7f9fc">
<div class="num" style="left:23.399999999999977px;margin-top:-9.3px">14</div>
<div class="cell" style="left:144.5px;width:140.0px;padding-top:2.4px;">Tarhana Çorbası</div>
<div class="cell" style="left:284.5px;width:318.5px;padding-top:2.4px;">Yumurta, Nane, Bitkisel Yağ, Tereyağı, Soya
Sosu...</div>
<div class="cell" style="left:603px;width:215.25px;padding-top:2.4px;">Yumurta, Süt-Laktoz, Soya,
Gluten</div>
<div class="cell" style="left:931.25px;width:124.25px;padding-top:2.4px;">Acı, Çok Acı</div>
<div class="num" style="left:842px;margin-top:-9.3px">10</div>
<div class="cell" style="left:1055.5px;width:72.5px;height:42.6px;padding-top:2.4px;">50 $</div>
<div class="cb" style="top:14.6px;background:#e9f2fe;"></div>
<div class="abs" style="left:1373px;top:15.9px;line-height:0"><svg width="20.000" height="20" viewBox="0 0 512 512" style=""><path fill="#222b45" d="M487.4 315.7l-42.6-24.6c4.3-23.2 4.3-47 0-70.2l42.6-24.6c4.9-2.8 7.1-8.6 5.5-14-11.1-35.6-30-67.8-54.7-94.6-3.8-4.1-10-5.1-14.8-2.3L380.8 110c-17.9-15.4-38.5-27.3-60.8-35.1V25.8c0-5.6-3.9-10.5-9.4-11.7-36.7-8.2-74.3-7.8-109.2 0-5.5 1.2-9.4 6.1-9.4 11.7V75c-22.2 7.9-42.8 19.8-60.8 35.1L88.7 85.5c-4.9-2.8-11-1.9-14.8 2.3-24.7 26.7-43.6 58.9-54.7 94.6-1.7 5.4.6 11.2 5.5 14L67.3 221c-4.3 23.2-4.3 47 0 70.2l-42.6 24.6c-4.9 2.8-7.1 8.6-5.5 14 11.1 35.6 30 67.8 54.7 94.6 3.8 4.1 10 5.1 14.8 2.3l42.6-24.6c17.9 15.4 38.5 27.3 60.8 35.1v49.2c0 5.6 3.9 10.5 9.4 11.7 36.7 8.2 74.3 7.8 109.2 0 5.5-1.2 9.4-6.1 9.4-11.7v-49.2c22.2-7.9 42.8-19.8 60.8-35.1l42.6 24.6c4.9 2.8 11 1.9 14.8-2.3 24.7-26.7 43.6-58.9 54.7-94.6 1.5-5.5-.7-11.3-5.6-14.1zM256 336c-44.1 0-80-35.9-80-80s35.9-80 80-80 80 35.9 80 80-35.9 80-80 80z"/></svg></div>
<div class="img" style="top:10.9px"><svg width="47" height="31" viewBox="0 0 47 31" style="display:block"><defs><filter id="tb4" x="-5%" y="-5%" width="110%" height="110%"><feGaussianBlur stdDeviation="11"/></filter><clipPath id="tc4"><rect x="148" y="91" width="993" height="655"/></clipPath></defs><g transform="scale(0.04733) translate(-148,-91)"><g clip-path="url(#tc4)"><rect x="148" y="91" width="993" height="655" fill="#ffffff"/><g filter="url(#tb4)">
<ellipse cx="620" cy="715" rx="440" ry="22" fill="#aab4c4" opacity=".6"/>
<polygon points="262,405 1000,400 1055,650 1050,700 195,705 190,650" fill="#d4dfdf"/>
<polygon points="190,650 1055,650 1050,700 195,705" fill="#b4c4c7"/>
<polygon points="300,255 548,255 556,402 280,402" fill="#eaefef"/>
<polygon points="300,255 548,255 550,280 298,280" fill="#d5dcdc"/>
<polygon points="358,258 468,385 375,398" fill="#ecbb3c"/>
<polygon points="250,410 542,410 522,652 215,642" fill="#e4eaea"/>
<ellipse cx="372" cy="540" rx="142" ry="90" fill="#80542a"/>
<g fill="#56361a" opacity=".8"><circle cx="300" cy="560" r="26"/><circle cx="390" cy="500" r="24"/><circle cx="440" cy="585" r="26"/><circle cx="340" cy="480" r="18"/></g>
<ellipse cx="790" cy="605" rx="195" ry="28" fill="#a7b7ba" opacity=".7"/>
<ellipse cx="790" cy="432" rx="207" ry="180" fill="#e4eaeb"/>
<ellipse cx="790" cy="378" rx="198" ry="122" fill="#cdd4d7"/>
<ellipse cx="787" cy="410" rx="188" ry="96" fill="#c94e2c"/>
<ellipse cx="790" cy="385" rx="140" ry="50" fill="#d8673c" opacity=".8"/>
<ellipse cx="780" cy="432" rx="80" ry="48" fill="#40692f"/>
</g></g></g></svg></div>
</div>
<div class="row" style="top:460.6px;height:50.8px;background:#fff">
<div class="num" style="left:23.399999999999977px;margin-top:-9.3px">33</div>
<div class="cell" style="left:144.5px;width:140.0px;padding-top:2.4px;">Arnavut Ciğeri</div>
<div class="cell" style="left:284.5px;width:318.5px;padding-top:2.4px;">Dana Ciğer, Karabiber, Un, Tuz, Pul Biber</div>
<div class="cell" style="left:603px;width:215.25px;padding-top:2.4px;">Gluten</div>
<div class="num" style="left:842px;margin-top:-9.3px">0</div>
<div class="cell" style="left:1055.5px;width:72.5px;height:39.8px;padding-top:2.4px;">0 $</div>
<div class="cb" style="top:13.2px;"></div>
<div class="abs" style="left:1373px;top:14.5px;line-height:0"><svg width="20.000" height="20" viewBox="0 0 512 512" style=""><path fill="#222b45" d="M487.4 315.7l-42.6-24.6c4.3-23.2 4.3-47 0-70.2l42.6-24.6c4.9-2.8 7.1-8.6 5.5-14-11.1-35.6-30-67.8-54.7-94.6-3.8-4.1-10-5.1-14.8-2.3L380.8 110c-17.9-15.4-38.5-27.3-60.8-35.1V25.8c0-5.6-3.9-10.5-9.4-11.7-36.7-8.2-74.3-7.8-109.2 0-5.5 1.2-9.4 6.1-9.4 11.7V75c-22.2 7.9-42.8 19.8-60.8 35.1L88.7 85.5c-4.9-2.8-11-1.9-14.8 2.3-24.7 26.7-43.6 58.9-54.7 94.6-1.7 5.4.6 11.2 5.5 14L67.3 221c-4.3 23.2-4.3 47 0 70.2l-42.6 24.6c-4.9 2.8-7.1 8.6-5.5 14 11.1 35.6 30 67.8 54.7 94.6 3.8 4.1 10 5.1 14.8 2.3l42.6-24.6c17.9 15.4 38.5 27.3 60.8 35.1v49.2c0 5.6 3.9 10.5 9.4 11.7 36.7 8.2 74.3 7.8 109.2 0 5.5-1.2 9.4-6.1 9.4-11.7v-49.2c22.2-7.9 42.8-19.8 60.8-35.1l42.6 24.6c4.9 2.8 11 1.9 14.8-2.3 24.7-26.7 43.6-58.9 54.7-94.6 1.5-5.5-.7-11.3-5.6-14.1zM256 336c-44.1 0-80-35.9-80-80s35.9-80 80-80 80 35.9 80 80-35.9 80-80 80z"/></svg></div>
<div class="img" style="top:10.1px"><svg width="47" height="31" viewBox="0 0 47 31" style="display:block"><defs><filter id="tb5" x="-5%" y="-5%" width="110%" height="110%"><feGaussianBlur stdDeviation="11"/></filter><clipPath id="tc5"><rect x="148" y="99" width="993" height="655"/></clipPath></defs><g transform="scale(0.04733) translate(-148,-99)"><g clip-path="url(#tc5)"><g filter="url(#tb5)">
<ellipse cx="648" cy="552" rx="322" ry="52" fill="#c4c4c4" opacity=".5"/>
<ellipse cx="642" cy="448" rx="320" ry="138" fill="#c6c3bc" transform="rotate(-4 642 448)"/>
<ellipse cx="644" cy="455" rx="308" ry="112" fill="#5c2823" transform="rotate(-4 644 455)"/>
<g fill="#cfcfcf"><rect x="480" y="492" width="16" height="58"/><rect x="642" y="498" width="16" height="52"/><rect x="792" y="472" width="16" height="52"/></g>
<ellipse cx="638" cy="358" rx="322" ry="124" fill="#d8d4c8" transform="rotate(-6 638 358)"/>
<ellipse cx="638" cy="356" rx="302" ry="106" fill="#cf8f1c" transform="rotate(-6 638 356)"/>
<ellipse cx="350" cy="392" rx="26" ry="40" fill="#f1ede0" opacity=".85"/>
<ellipse cx="640" cy="342" rx="262" ry="106" fill="#5a3a1c" transform="rotate(-6 640 342)"/>
<g fill="#2c1b0f" opacity=".75"><ellipse cx="560" cy="372" rx="70" ry="42"/><ellipse cx="790" cy="345" rx="42" ry="48"/><ellipse cx="690" cy="298" rx="45" ry="25"/><ellipse cx="640" cy="420" rx="80" ry="20"/></g>
<g fill="#805628" opacity=".8"><ellipse cx="465" cy="335" rx="48" ry="36"/><ellipse cx="735" cy="395" rx="48" ry="26"/><ellipse cx="615" cy="265" rx="55" ry="22"/><ellipse cx="840" cy="290" rx="35" ry="22"/></g>
</g></g></g></svg></div>
</div>
<div class="row" style="top:511.4px;height:51.9px;background:#f7f9fc">
<div class="num" style="left:23.399999999999977px;margin-top:-9.3px">33</div>
<div class="cell" style="left:144.5px;width:140.0px;padding-top:2.4px;">Izgara Sosis</div>
<div class="cell" style="left:284.5px;width:318.5px;padding-top:2.4px;">Karabiber, Tuz, Sosis</div>
<div class="cell" style="left:603px;width:215.25px;padding-top:2.4px;">Gluten</div>
<div class="num" style="left:842px;margin-top:-9.3px">10</div>
<div class="cell" style="left:1055.5px;width:72.5px;height:40.9px;padding-top:2.4px;">0 $</div>
<div class="cb" style="top:13.7px;background:#e9f2fe;"></div>
<div class="abs" style="left:1373px;top:15.0px;line-height:0"><svg width="20.000" height="20" viewBox="0 0 512 512" style=""><path fill="#222b45" d="M487.4 315.7l-42.6-24.6c4.3-23.2 4.3-47 0-70.2l42.6-24.6c4.9-2.8 7.1-8.6 5.5-14-11.1-35.6-30-67.8-54.7-94.6-3.8-4.1-10-5.1-14.8-2.3L380.8 110c-17.9-15.4-38.5-27.3-60.8-35.1V25.8c0-5.6-3.9-10.5-9.4-11.7-36.7-8.2-74.3-7.8-109.2 0-5.5 1.2-9.4 6.1-9.4 11.7V75c-22.2 7.9-42.8 19.8-60.8 35.1L88.7 85.5c-4.9-2.8-11-1.9-14.8 2.3-24.7 26.7-43.6 58.9-54.7 94.6-1.7 5.4.6 11.2 5.5 14L67.3 221c-4.3 23.2-4.3 47 0 70.2l-42.6 24.6c-4.9 2.8-7.1 8.6-5.5 14 11.1 35.6 30 67.8 54.7 94.6 3.8 4.1 10 5.1 14.8 2.3l42.6-24.6c17.9 15.4 38.5 27.3 60.8 35.1v49.2c0 5.6 3.9 10.5 9.4 11.7 36.7 8.2 74.3 7.8 109.2 0 5.5-1.2 9.4-6.1 9.4-11.7v-49.2c22.2-7.9 42.8-19.8 60.8-35.1l42.6 24.6c4.9 2.8 11 1.9 14.8-2.3 24.7-26.7 43.6-58.9 54.7-94.6 1.5-5.5-.7-11.3-5.6-14.1zM256 336c-44.1 0-80-35.9-80-80s35.9-80 80-80 80 35.9 80 80-35.9 80-80 80z"/></svg></div>
<div class="img" style="top:10.6px"><svg width="47" height="31" viewBox="0 0 47 31" style="display:block"><defs><filter id="tb6" x="-5%" y="-5%" width="110%" height="110%"><feGaussianBlur stdDeviation="11"/></filter><clipPath id="tc6"><rect x="148" y="106" width="993" height="655"/></clipPath></defs><g transform="scale(0.04733) translate(-148,-106)"><g clip-path="url(#tc6)"><rect x="148" y="106" width="993" height="655" fill="#eceae8"/><g filter="url(#tb6)">
<ellipse cx="640" cy="455" rx="450" ry="285" fill="#d9dce6"/>
<ellipse cx="640" cy="440" rx="445" ry="275" fill="#e7eaf2"/>
<ellipse cx="640" cy="425" rx="380" ry="215" fill="#e3e6ef"/>
<ellipse cx="365" cy="450" rx="36" ry="58" fill="#5a2418"/>
<ellipse cx="610" cy="340" rx="222" ry="96" fill="#ecd98c"/>
<ellipse cx="590" cy="320" rx="120" ry="45" fill="#f2e4a4"/>
<path d="M455 468 Q 700 458 912 385" fill="none" stroke="#d4413f" stroke-width="70" stroke-linecap="round"/>
<path d="M470 470 Q 700 462 900 395" fill="none" stroke="#8c2a22" stroke-width="10" stroke-dasharray="14 40" opacity=".7"/>
<path d="M405 528 Q 670 592 935 482" fill="none" stroke="#de5468" stroke-width="112" stroke-linecap="round"/>
<path d="M400 500 Q 670 545 930 445" fill="none" stroke="#ea6a80" stroke-width="40" stroke-linecap="round" opacity=".8"/>
<g fill="#8c2338" opacity=".75"><circle cx="470" cy="520" r="13"/><circle cx="560" cy="535" r="13"/><circle cx="650" cy="535" r="13"/><circle cx="740" cy="520" r="13"/><circle cx="820" cy="498" r="13"/><circle cx="895" cy="470" r="13"/><circle cx="520" cy="585" r="11"/><circle cx="620" cy="598" r="11"/><circle cx="720" cy="590" r="11"/><circle cx="810" cy="565" r="11"/></g>
<ellipse cx="520" cy="342" rx="42" ry="22" fill="#7fb842"/>
<ellipse cx="605" cy="376" rx="26" ry="18" fill="#6aa83a"/>
<ellipse cx="660" cy="332" rx="26" ry="18" fill="#8cc04c"/>
<ellipse cx="580" cy="240" rx="16" ry="12" fill="#8cc04c"/>
</g></g></g></svg></div>
</div>
<div class="row" style="top:563.3px;height:52.4px;background:#fff">
<div class="num" style="left:23.399999999999977px;margin-top:-9.3px">20</div>
<div class="cell" style="left:144.5px;width:140.0px;padding-top:2.4px;">Dana Carpaccio</div>
<div class="cell" style="left:284.5px;width:318.5px;padding-top:2.4px;">Dana Eti, Roka, Karabiber, Zeytinyağı,
Limon...</div>
<div class="cell" style="left:603px;width:215.25px;padding-top:2.4px;">Süt-Laktoz</div>
<div class="cell" style="left:931.25px;width:124.25px;padding-top:2.4px;">Domuz
İçermez</div>
<div class="num" style="left:842px;margin-top:-9.3px">0</div>
<div class="cell" style="left:1055.5px;width:72.5px;height:41.4px;padding-top:2.4px;">0 $</div>
<div class="cb on" style="top:14.0px"><svg width="19" height="19" viewBox="0 0 19 19" style="display:block"><path d="M5.8 9.8 L8.5 12.4 L13.3 7.0" fill="none" stroke="#fff" stroke-width="2.6" stroke-linecap="round" stroke-linejoin="round"/></svg></div>
<div class="abs" style="left:1373px;top:15.3px;line-height:0"><svg width="20.000" height="20" viewBox="0 0 512 512" style=""><path fill="#222b45" d="M487.4 315.7l-42.6-24.6c4.3-23.2 4.3-47 0-70.2l42.6-24.6c4.9-2.8 7.1-8.6 5.5-14-11.1-35.6-30-67.8-54.7-94.6-3.8-4.1-10-5.1-14.8-2.3L380.8 110c-17.9-15.4-38.5-27.3-60.8-35.1V25.8c0-5.6-3.9-10.5-9.4-11.7-36.7-8.2-74.3-7.8-109.2 0-5.5 1.2-9.4 6.1-9.4 11.7V75c-22.2 7.9-42.8 19.8-60.8 35.1L88.7 85.5c-4.9-2.8-11-1.9-14.8 2.3-24.7 26.7-43.6 58.9-54.7 94.6-1.7 5.4.6 11.2 5.5 14L67.3 221c-4.3 23.2-4.3 47 0 70.2l-42.6 24.6c-4.9 2.8-7.1 8.6-5.5 14 11.1 35.6 30 67.8 54.7 94.6 3.8 4.1 10 5.1 14.8 2.3l42.6-24.6c17.9 15.4 38.5 27.3 60.8 35.1v49.2c0 5.6 3.9 10.5 9.4 11.7 36.7 8.2 74.3 7.8 109.2 0 5.5-1.2 9.4-6.1 9.4-11.7v-49.2c22.2-7.9 42.8-19.8 60.8-35.1l42.6 24.6c4.9 2.8 11 1.9 14.8-2.3 24.7-26.7 43.6-58.9 54.7-94.6 1.5-5.5-.7-11.3-5.6-14.1zM256 336c-44.1 0-80-35.9-80-80s35.9-80 80-80 80 35.9 80 80-35.9 80-80 80z"/></svg></div>
<div class="img" style="top:10.9px"><svg width="47" height="31" viewBox="0 0 47 31" style="display:block"><defs><filter id="tb7" x="-5%" y="-5%" width="110%" height="110%"><feGaussianBlur stdDeviation="11"/></filter><clipPath id="tc7"><rect x="148" y="89" width="993" height="655"/></clipPath></defs><g transform="scale(0.04733) translate(-148,-89)"><g clip-path="url(#tc7)"><rect x="148" y="89" width="993" height="655" fill="#f9f9f9"/><g filter="url(#tb7)">
<polygon points="300,345 1010,325 1120,550 1100,578 230,602 215,575" fill="#e2e4e4"/>
<polygon points="215,575 1120,550 1100,578 230,602" fill="#c9cccc"/>
<line x1="300" y1="352" x2="1010" y2="332" stroke="#b0b3b3" stroke-width="14"/>
<ellipse cx="330" cy="540" rx="62" ry="36" fill="#f4f4f4"/>
<ellipse cx="410" cy="450" rx="56" ry="46" fill="#c4666a"/>
<ellipse cx="565" cy="430" rx="92" ry="42" fill="#bf6066"/>
<ellipse cx="700" cy="442" rx="52" ry="36" fill="#cd7a7e"/>
<ellipse cx="842" cy="420" rx="82" ry="46" fill="#c25c62"/>
<rect x="485" y="415" width="36" height="40" fill="#f3f3ef"/><rect x="718" y="398" width="32" height="44" fill="#f3f3ef"/>
<ellipse cx="640" cy="518" rx="232" ry="46" fill="#2c6222"/>
<g fill="#f0ece6" opacity=".8"><circle cx="450" cy="420" r="10"/><circle cx="600" cy="405" r="10"/><circle cx="800" cy="400" r="10"/><circle cx="880" cy="440" r="9"/></g>
<ellipse cx="620" cy="540" rx="170" ry="24" fill="#1d4718"/>
<ellipse cx="940" cy="507" rx="42" ry="15" fill="#8a4a3a"/><ellipse cx="1015" cy="512" rx="26" ry="12" fill="#8a4a3a"/>
<ellipse cx="330" cy="460" rx="18" ry="14" fill="#e6d67a" opacity=".7"/><ellipse cx="1010" cy="470" rx="18" ry="10" fill="#e6d67a" opacity=".7"/>
</g></g></g></svg></div>
</div>
<div class="row" style="top:615.7px;height:52.0px;background:#f7f9fc">
<div class="num" style="left:23.399999999999977px;margin-top:-9.3px">80</div>
<div class="cell" style="left:144.5px;width:140.0px;padding-top:2.4px;">Cassata Siciliana</div>
<div class="cell" style="left:284.5px;width:318.5px;padding-top:2.4px;">Süt, Yumurta, Vanilya, Un, Şeker...</div>
<div class="cell" style="left:603px;width:215.25px;padding-top:2.4px;">Yumurta, Süt-Laktoz, Gluten</div>
<div class="num" style="left:842px;margin-top:-9.3px">0</div>
<div class="cell" style="left:1055.5px;width:72.5px;height:41.0px;padding-top:2.4px;">0 $</div>
<div class="cb on" style="top:13.8px"><svg width="19" height="19" viewBox="0 0 19 19" style="display:block"><path d="M5.8 9.8 L8.5 12.4 L13.3 7.0" fill="none" stroke="#fff" stroke-width="2.6" stroke-linecap="round" stroke-linejoin="round"/></svg></div>
<div class="abs" style="left:1373px;top:15.1px;line-height:0"><svg width="20.000" height="20" viewBox="0 0 512 512" style=""><path fill="#222b45" d="M487.4 315.7l-42.6-24.6c4.3-23.2 4.3-47 0-70.2l42.6-24.6c4.9-2.8 7.1-8.6 5.5-14-11.1-35.6-30-67.8-54.7-94.6-3.8-4.1-10-5.1-14.8-2.3L380.8 110c-17.9-15.4-38.5-27.3-60.8-35.1V25.8c0-5.6-3.9-10.5-9.4-11.7-36.7-8.2-74.3-7.8-109.2 0-5.5 1.2-9.4 6.1-9.4 11.7V75c-22.2 7.9-42.8 19.8-60.8 35.1L88.7 85.5c-4.9-2.8-11-1.9-14.8 2.3-24.7 26.7-43.6 58.9-54.7 94.6-1.7 5.4.6 11.2 5.5 14L67.3 221c-4.3 23.2-4.3 47 0 70.2l-42.6 24.6c-4.9 2.8-7.1 8.6-5.5 14 11.1 35.6 30 67.8 54.7 94.6 3.8 4.1 10 5.1 14.8 2.3l42.6-24.6c17.9 15.4 38.5 27.3 60.8 35.1v49.2c0 5.6 3.9 10.5 9.4 11.7 36.7 8.2 74.3 7.8 109.2 0 5.5-1.2 9.4-6.1 9.4-11.7v-49.2c22.2-7.9 42.8-19.8 60.8-35.1l42.6 24.6c4.9 2.8 11 1.9 14.8-2.3 24.7-26.7 43.6-58.9 54.7-94.6 1.5-5.5-.7-11.3-5.6-14.1zM256 336c-44.1 0-80-35.9-80-80s35.9-80 80-80 80 35.9 80 80-35.9 80-80 80z"/></svg></div>
<div class="img" style="top:11.3px"><svg width="47" height="31" viewBox="0 0 47 31" style="display:block"><defs><filter id="tb8" x="-5%" y="-5%" width="110%" height="110%"><feGaussianBlur stdDeviation="11"/></filter><clipPath id="tc8"><rect x="148" y="95" width="993" height="655"/></clipPath></defs><g transform="scale(0.04733) translate(-148,-95)"><g clip-path="url(#tc8)"><rect x="148" y="95" width="993" height="655" fill="#ffffff"/><g filter="url(#tb8)">
<path d="M175 440 C 330 560, 560 660, 790 690 C 920 700, 1045 665, 1050 570" fill="none" stroke="#c4c9d6" stroke-width="26" opacity=".8"/>
<path d="M160 412 C 300 330, 700 255, 850 262 C 985 270, 1062 420, 1052 560 C 1040 662, 900 690, 780 670 C 560 640, 250 522, 160 412 Z" fill="#f2f0ed" stroke="#a89a88" stroke-width="12"/>
<ellipse cx="675" cy="548" rx="127" ry="60" fill="#8f1a2c"/>
<polygon points="430,402 632,380 560,452 440,478" fill="#7a1c28"/>
<ellipse cx="385" cy="487" rx="42" ry="30" fill="#181212"/>
<ellipse cx="462" cy="456" rx="42" ry="14" fill="#d8402c"/>
<polygon points="700,300 762,290 682,512 620,500" fill="#b98a6a"/>
<polygon points="780,330 862,410 842,442 770,402" fill="#584032"/>
<polygon points="770,402 852,422 762,482 730,470" fill="#e3dccf"/>
<polygon points="740,330 790,320 740,480 700,480" fill="#8f1a2c" opacity=".75"/>
<line x1="815" y1="170" x2="722" y2="478" stroke="#3a3a42" stroke-width="16" stroke-linecap="round"/>
<ellipse cx="660" cy="520" rx="22" ry="12" fill="#e0503a"/>
<rect x="955" y="445" width="76" height="52" fill="#8d9096"/>
</g></g></g></svg></div>
</div>
<div class="row" style="top:667.7px;height:52.3px;background:#fff">
<div class="num" style="left:23.399999999999977px;margin-top:-9.3px">52</div>
<div class="cell" style="left:144.5px;width:140.0px;padding-top:2.4px;">Dana Kaburga
Rosto</div>
<div class="cell" style="left:284.5px;width:318.5px;padding-top:2.4px;">Dana Eti, Soğan, Kekik, Biberiye, Zeytinyağı...</div>
<div class="num" style="left:842px;margin-top:-9.3px">0</div>
<div class="cell" style="left:1055.5px;width:72.5px;height:41.3px;padding-top:2.4px;">13 $</div>
<div class="cb on" style="top:13.9px"><svg width="19" height="19" viewBox="0 0 19 19" style="display:block"><path d="M5.8 9.8 L8.5 12.4 L13.3 7.0" fill="none" stroke="#fff" stroke-width="2.6" stroke-linecap="round" stroke-linejoin="round"/></svg></div>
<div class="abs" style="left:1373px;top:15.2px;line-height:0"><svg width="20.000" height="20" viewBox="0 0 512 512" style=""><path fill="#222b45" d="M487.4 315.7l-42.6-24.6c4.3-23.2 4.3-47 0-70.2l42.6-24.6c4.9-2.8 7.1-8.6 5.5-14-11.1-35.6-30-67.8-54.7-94.6-3.8-4.1-10-5.1-14.8-2.3L380.8 110c-17.9-15.4-38.5-27.3-60.8-35.1V25.8c0-5.6-3.9-10.5-9.4-11.7-36.7-8.2-74.3-7.8-109.2 0-5.5 1.2-9.4 6.1-9.4 11.7V75c-22.2 7.9-42.8 19.8-60.8 35.1L88.7 85.5c-4.9-2.8-11-1.9-14.8 2.3-24.7 26.7-43.6 58.9-54.7 94.6-1.7 5.4.6 11.2 5.5 14L67.3 221c-4.3 23.2-4.3 47 0 70.2l-42.6 24.6c-4.9 2.8-7.1 8.6-5.5 14 11.1 35.6 30 67.8 54.7 94.6 3.8 4.1 10 5.1 14.8 2.3l42.6-24.6c17.9 15.4 38.5 27.3 60.8 35.1v49.2c0 5.6 3.9 10.5 9.4 11.7 36.7 8.2 74.3 7.8 109.2 0 5.5-1.2 9.4-6.1 9.4-11.7v-49.2c22.2-7.9 42.8-19.8 60.8-35.1l42.6 24.6c4.9 2.8 11 1.9 14.8-2.3 24.7-26.7 43.6-58.9 54.7-94.6 1.5-5.5-.7-11.3-5.6-14.1zM256 336c-44.1 0-80-35.9-80-80s35.9-80 80-80 80 35.9 80 80-35.9 80-80 80z"/></svg></div>
<div class="img" style="top:11.7px"><svg width="47" height="31" viewBox="0 0 47 31" style="display:block"><defs><filter id="tb9" x="-5%" y="-5%" width="110%" height="110%"><feGaussianBlur stdDeviation="11"/></filter><clipPath id="tc9"><rect x="148" y="106" width="993" height="655"/></clipPath></defs><g transform="scale(0.04733) translate(-148,-106)"><g clip-path="url(#tc9)"><rect x="148" y="106" width="993" height="655" fill="#fdfdfd"/><g filter="url(#tb9)">
<polygon points="320,250 965,240 1115,590 1105,627 175,627 165,590" fill="#7d4524"/>
<polygon points="168,575 1110,572 1105,627 175,627" fill="#93542b"/>
<polygon points="372,272 925,265 1000,545 280,552" fill="#1d1e23"/>
<polygon points="450,285 540,235 640,240 735,290 770,380 745,502 600,452 470,402" fill="#7b6552"/>
<polygon points="625,285 725,290 745,380 700,420 640,400" fill="#b79c8a"/>
<polygon points="470,290 540,250 600,260 560,380 480,390" fill="#9b8268"/>
<polygon points="560,300 620,290 640,420 590,430" fill="#2f2219"/>
<polygon points="600,430 740,420 745,500 620,470" fill="#5a4632"/>
<ellipse cx="590" cy="438" rx="35" ry="14" fill="#c9c0a8"/>
<rect x="775" y="438" width="128" height="34" rx="14" fill="#b9bbc0"/>
<g fill="#8c2a2a" opacity=".7"><circle cx="370" cy="470" r="9"/><circle cx="545" cy="535" r="9"/><circle cx="430" cy="445" r="8"/><circle cx="835" cy="310" r="8"/></g>
</g></g></g></svg></div>
</div>
<div class="row" style="top:720.0px;height:52.2px;background:#f7f9fc">
<div class="num" style="left:23.399999999999977px;margin-top:-9.3px">34</div>
<div class="cell" style="left:144.5px;width:140.0px;padding-top:2.4px;">Izgara Dana Sosis</div>
<div class="cell" style="left:284.5px;width:318.5px;padding-top:2.4px;">Sarımsak, Soğan, Su, Baharatlar, Sosis</div>
<div class="cell" style="left:603px;width:215.25px;padding-top:2.4px;">Gluten</div>
<div class="num" style="left:842px;margin-top:-9.3px">0</div>
<div class="cell" style="left:1055.5px;width:72.5px;height:41.2px;padding-top:2.4px;">0 $</div>
<div class="cb on" style="top:13.9px"><svg width="19" height="19" viewBox="0 0 19 19" style="display:block"><path d="M5.8 9.8 L8.5 12.4 L13.3 7.0" fill="none" stroke="#fff" stroke-width="2.6" stroke-linecap="round" stroke-linejoin="round"/></svg></div>
<div class="abs" style="left:1373px;top:15.2px;line-height:0"><svg width="20.000" height="20" viewBox="0 0 512 512" style=""><path fill="#222b45" d="M487.4 315.7l-42.6-24.6c4.3-23.2 4.3-47 0-70.2l42.6-24.6c4.9-2.8 7.1-8.6 5.5-14-11.1-35.6-30-67.8-54.7-94.6-3.8-4.1-10-5.1-14.8-2.3L380.8 110c-17.9-15.4-38.5-27.3-60.8-35.1V25.8c0-5.6-3.9-10.5-9.4-11.7-36.7-8.2-74.3-7.8-109.2 0-5.5 1.2-9.4 6.1-9.4 11.7V75c-22.2 7.9-42.8 19.8-60.8 35.1L88.7 85.5c-4.9-2.8-11-1.9-14.8 2.3-24.7 26.7-43.6 58.9-54.7 94.6-1.7 5.4.6 11.2 5.5 14L67.3 221c-4.3 23.2-4.3 47 0 70.2l-42.6 24.6c-4.9 2.8-7.1 8.6-5.5 14 11.1 35.6 30 67.8 54.7 94.6 3.8 4.1 10 5.1 14.8 2.3l42.6-24.6c17.9 15.4 38.5 27.3 60.8 35.1v49.2c0 5.6 3.9 10.5 9.4 11.7 36.7 8.2 74.3 7.8 109.2 0 5.5-1.2 9.4-6.1 9.4-11.7v-49.2c22.2-7.9 42.8-19.8 60.8-35.1l42.6 24.6c4.9 2.8 11 1.9 14.8-2.3 24.7-26.7 43.6-58.9 54.7-94.6 1.5-5.5-.7-11.3-5.6-14.1zM256 336c-44.1 0-80-35.9-80-80s35.9-80 80-80 80 35.9 80 80-35.9 80-80 80z"/></svg></div>
<div class="img" style="top:10.8px"><svg width="47" height="31" viewBox="0 0 47 31" style="display:block"><defs><filter id="tb10" x="-5%" y="-5%" width="110%" height="110%"><feGaussianBlur stdDeviation="11"/></filter><clipPath id="tc10"><rect x="148" y="99" width="993" height="655"/></clipPath></defs><g transform="scale(0.04733) translate(-148,-99)"><g clip-path="url(#tc10)"><rect x="148" y="99" width="993" height="655" fill="#ffffff"/><g filter="url(#tb10)">
<polygon points="340,275 870,255 1000,680 985,732 255,742 240,692" fill="#b98a5c"/>
<polygon points="240,692 1000,680 985,732 255,742" fill="#9c6a3e"/>
<polygon points="392,365 858,345 925,620 892,652 340,657 315,622" fill="#17171b"/>
<rect x="900" y="440" width="62" height="122" fill="#4a4038"/>
<polygon points="385,182 540,162 532,322 400,342" fill="#d69a26"/>
<polygon points="400,190 430,150 470,185 500,135 535,190 530,230 400,240" fill="#ecb432"/>
<g stroke="#5a4a2a" stroke-width="8" opacity=".6"><line x1="385" y1="250" x2="535" y2="235"/><line x1="440" y1="180" x2="445" y2="335"/><line x1="490" y1="175" x2="495" y2="328"/></g>
<ellipse cx="650" cy="255" rx="46" ry="26" fill="#ebe6b2"/><rect x="618" y="270" width="72" height="42" fill="#6a3a2a"/>
<ellipse cx="775" cy="245" rx="46" ry="26" fill="#e8e4b6"/><rect x="738" y="268" width="74" height="42" fill="#6e6a50"/>
<path d="M355 482 L 590 292 Q 652 300 642 352 L 472 482 Q 400 522 355 482 Z" fill="#c9a244"/>
<path d="M410 572 L 720 376 Q 792 382 772 422 L 522 592 Q 440 612 410 572 Z" fill="#c7a040"/>
<g stroke="#4a3818" stroke-width="15" opacity=".7"><line x1="430" y1="440" x2="470" y2="475"/><line x1="475" y1="400" x2="520" y2="440"/><line x1="525" y1="360" x2="570" y2="400"/><line x1="572" y1="322" x2="615" y2="360"/><line x1="480" y1="540" x2="515" y2="575"/><line x1="540" y1="500" x2="578" y2="538"/><line x1="600" y1="462" x2="638" y2="500"/><line x1="660" y1="425" x2="698" y2="462"/><line x1="715" y1="392" x2="748" y2="428"/></g>
<line x1="600" y1="550" x2="838" y2="412" stroke="#aa3a35" stroke-width="50" stroke-linecap="round"/>
<line x1="622" y1="596" x2="858" y2="452" stroke="#a8322f" stroke-width="46" stroke-linecap="round"/>
<line x1="600" y1="540" x2="835" y2="402" stroke="#cc5a50" stroke-width="12" stroke-linecap="round" opacity=".7"/>
</g></g></g></svg></div>
</div>
<div class="abs" style="left:0;top:772.2px;width:1419.5px;height:1px;background:#edf1f7"></div>
<div class="vl" style="left:144px;height:590.2px"></div>
<div class="vl" style="left:284px;height:590.2px"></div>
<div class="vl" style="left:603px;height:590.2px"></div>
<div class="vl" style="left:818px;height:590.2px"></div>
<div class="vl" style="left:931px;height:590.2px"></div>
<div class="vl" style="left:1055px;height:590.2px"></div>
<div class="vl" style="left:1128px;height:590.2px"></div>
<div class="vl" style="left:1218px;height:590.2px"></div>
<div class="vl" style="left:1347px;height:590.2px"></div>
<div class="abs" style="left:1138.2px;top:296px;width:81.6px;height:62px;border:3px solid #00ea33;border-radius:3px"></div>
<div class="abs" style="left:564px;top:777px;width:291.5999999999999px;height:40px;border:1px solid #dee2e6;border-radius:4px;overflow:hidden;background:#fff">
<div class="abs" style="left:39.299999999999955px;top:0;width:1px;height:40px;background:#dee2e6"></div>
<div class="abs" style="left:81.79999999999995px;top:0;width:1px;height:40px;background:#dee2e6"></div>
<div class="abs" style="left:123px;top:0;width:1px;height:40px;background:#dee2e6"></div>
<div class="abs" style="left:164.39999999999998px;top:0;width:1px;height:40px;background:#dee2e6"></div>
<div class="abs" style="left:209px;top:0;width:1px;height:40px;background:#dee2e6"></div>
<div class="abs" style="left:249.4000000000001px;top:0;width:1px;height:40px;background:#dee2e6"></div>
<div class="abs" style="left:39.299999999999955px;top:-1px;width:43.0px;height:40px;background:#007bff"></div>
</div>
</div>
<div class="abs" style="left:1674.5px;top:62px;width:5.5px;height:783px;background:#f7f9fc;z-index:11"></div>
<div class="abs" style="left:1674.8px;top:62px;width:5.2px;height:644.5px;background:#e4e9f2;border-radius:0 0 2.6px 2.6px;z-index:12"></div>
</body></html>
